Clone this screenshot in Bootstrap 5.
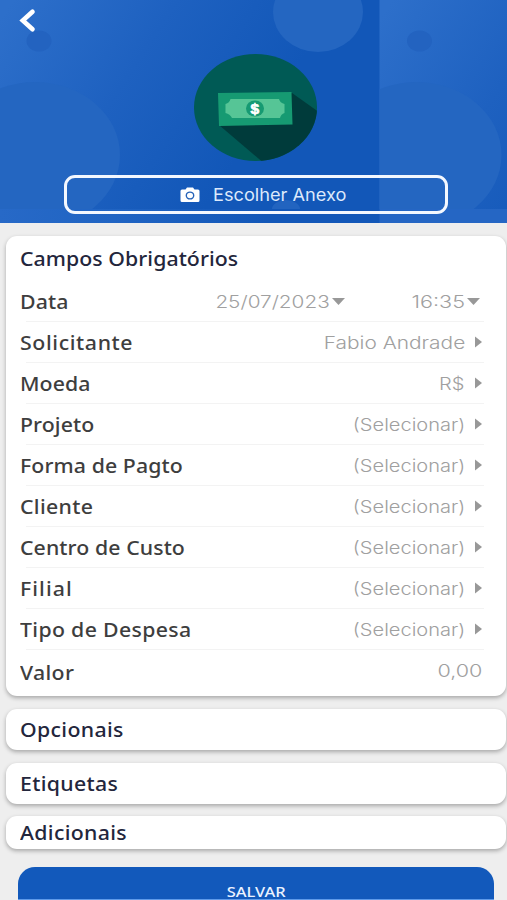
<!DOCTYPE html>
<html lang="pt-BR">
<head>
<meta charset="utf-8">
<meta name="viewport" content="width=device-width, initial-scale=1">
<title>Despesa</title>
<link href="https://cdn.jsdelivr.net/npm/bootstrap@5.3.0/dist/css/bootstrap.min.css" rel="stylesheet">
<style>
body{background:#eee;font-family:"Noto Sans","Open Sans",sans-serif;height:900px;overflow:hidden}
.hero{height:223px;background:#1257b8}
.hero-bg{z-index:0}
.back{left:18px;top:8px}
.note{margin:53px 0 0 2px}
.anexo{width:384px;height:39px;margin:13px 0 0 4px;border:3px solid #f4f8ff;border-radius:11px;color:#dce9fb;font:400 17px Inter,sans-serif}
.anexo:hover{border-color:#fff;color:#fff}
.anexo .cam{margin:0 13px 0 113px}
.anexo span{transform-origin:left;transform:scaleX(1.07)}
.stretch-l,.stretch-r{display:inline-block;white-space:nowrap}
.panel{margin:0 1px 0 6px;border:0;border-radius:11px;box-shadow:0 2px 4px rgba(0,0,0,.3);padding:0 22px 0 14px;color:#23263c}
.lbl{font-size:19px;font-weight:500;line-height:24px}
.stretch-l{transform-origin:left;transform:scaleX(1.12);letter-spacing:.3px}
.head .stretch-l{letter-spacing:.05px}
.lbl.snug{letter-spacing:.08px}
.lbl.loose{letter-spacing:.55px}
.lbl.wide{letter-spacing:.95px}
.stretch-r{transform-origin:right;transform:scaleX(1.18)}
.field{height:41px;color:#3e3e3e}
.field + .field::before{content:"";position:absolute;left:6px;right:0;top:-1px;height:1px;background:#f3f3f3}
.val{color:#a0a0a0;font:300 17px Inter,sans-serif}
.val.name{transform:scaleX(1.228)}
.val.date{transform:scaleX(1.22)}
.val.time{width:120px;transform:scaleX(1.27)}
.val.amount{margin-right:2px;padding-bottom:4px;transform:scaleX(1.27)}
.down{margin:0 4px 0 2px}
.date + .down{margin-right:0}
.next{margin:0 2px 2px 10px}
.main-panel{height:460px;margin-top:13px}
.head{height:45px}
.last{height:46px}
.bar{height:41px;margin-top:13px}
.bar-sm{height:33px;margin-top:12px}
.save{margin:18px 13px 0 18px;height:33px;border:0;border-bottom:1px solid #5f9bea;border-radius:17px 17px 0 0;background:#1259bb;color:#eaf2ff;font:500 13.5px/14px "Noto Sans",sans-serif;padding:18px 0 0}
.save span{transform:scaleX(1.22)}
</style>
<script src="https://cdn.jsdelivr.net/npm/bootstrap@5.3.0/dist/js/bootstrap.bundle.min.js"></script>
</head>
<body class="d-flex flex-column">
<header class="hero position-relative d-flex flex-column align-items-center flex-shrink-0 overflow-hidden">
  <svg class="hero-bg position-absolute top-0 start-0" width="507" height="223" viewBox="0 0 507 223" aria-hidden="true">
    <defs>
      <linearGradient id="g" gradientUnits="userSpaceOnUse" x1="0" y1="20" x2="230" y2="170"><stop offset="0" stop-color="#2d6fca"/><stop offset=".5" stop-color="#1e61c0"/><stop offset="1" stop-color="#1257b8"/></linearGradient>
      <linearGradient id="s" x1="0" x2="1"><stop offset="0" stop-color="#2769c7"/><stop offset=".3" stop-color="#2064c3"/><stop offset=".7" stop-color="#1257b8"/></linearGradient>
      <clipPath id="c"><rect width="380" height="209"/></clipPath>
    </defs>
    <rect width="380" height="209" fill="url(#g)"/>
    <g clip-path="url(#c)">
      <ellipse cx="35" cy="155" rx="85" ry="73" fill="#2466c1"/>
      <ellipse cx="39" cy="41" rx="12.500" ry="10.500" fill="#2363c0"/>
      <ellipse cx="318" cy="12" rx="45" ry="40" fill="#2466c1"/>
      <ellipse cx="286" cy="209" rx="14" ry="9" fill="#2264c0"/>
    </g>
    <rect y="209" width="380" height="14" fill="url(#s)"/>
    <g transform="translate(379.500 0)">
      <rect width="127.500" height="209" fill="url(#g)"/>
      <g clip-path="url(#c)">
        <ellipse cx="37" cy="155" rx="85" ry="73" fill="#2466c1"/>
        <ellipse cx="40" cy="41" rx="12.500" ry="10.500" fill="#2363c0"/>
      </g>
      <rect y="209" width="127.500" height="14" fill="#2566c4"/>
    </g>
  </svg>
  <a href="#" class="back position-absolute lh-1" aria-label="Voltar"><svg width="20" height="26" viewBox="0 0 20 26"><path d="M14.500 3.800 4.800 12.500 14.500 21.200" fill="none" stroke="#fff" stroke-width="4.600" stroke-linecap="round"/></svg></a>
  <svg class="note position-relative flex-shrink-0" width="126" height="109" viewBox="192 53 126 109" aria-hidden="true">
    <clipPath id="d"><ellipse cx="255.500" cy="107.500" rx="61.500" ry="53.500"/></clipPath>
    <ellipse cx="255.500" cy="107.500" rx="61.500" ry="53.500" fill="#005a55"/>
    <path clip-path="url(#d)" d="M292 93 330 120V170H272L219 125Z" fill="#003b3b"/>
    <path d="M218 93 291.500 92 292.500 124.500 219 126Z" fill="#169a72"/>
    <path d="M230.500 99H279Q280 103 284.500 104V113Q281 114 280 118H232Q230 114 225.500 113V104Q229.500 103 230.500 99Z" fill="#56c596"/>
    <ellipse cx="255" cy="108.500" rx="9" ry="8" fill="#169a72"/>
    <text x="254.800" y="114" text-anchor="middle" font-family="Liberation Sans,sans-serif" font-weight="700" font-size="15.500" fill="#fff" stroke="#fff" stroke-width=".7">$</text>
  </svg>
  <button type="button" class="btn anexo position-relative d-flex align-items-center p-0 flex-shrink-0"><svg class="cam flex-shrink-0" width="20" height="16" viewBox="0 0 20 16"><path fill="#fff" d="M2 2.500H5.500L7 .5H13L14.500 2.500H18Q19.500 2.500 19.500 4V13.500Q19.500 15 18 15H2Q.5 15 .5 13.500V4Q.5 2.500 2 2.500Z"/><ellipse cx="10" cy="8.500" rx="3.700" ry="3.400" fill="none" stroke="#2562b8" stroke-width="1.400"/></svg><span>Escolher Anexo</span></button>
</header>
<main>
  <section class="card panel main-panel">
    <div class="head lbl d-flex align-items-center"><span class="stretch-l">Campos Obrigatórios</span></div>
    <div class="field position-relative d-flex align-items-center"><span class="lbl stretch-l snug">Data</span><span class="val date ms-auto stretch-r">25/07/2023</span><svg class="down" width="13" height="7"><path d="M0 0H13L6.500 7Z" fill="#989898"/></svg><span class="val time stretch-r text-end">16:35</span><svg class="down" width="13" height="7"><path d="M0 0H13L6.500 7Z" fill="#989898"/></svg></div>
    <div class="field position-relative d-flex align-items-center"><span class="lbl stretch-l loose">Solicitante</span><span class="val name ms-auto stretch-r">Fabio Andrade</span><svg class="next" width="7" height="12"><path d="M0 .5 7 6 0 11.500Z" fill="#989898"/></svg></div>
    <div class="field position-relative d-flex align-items-center"><span class="lbl stretch-l snug">Moeda</span><span class="val ms-auto stretch-r">R$</span><svg class="next" width="7" height="12"><path d="M0 .5 7 6 0 11.500Z" fill="#989898"/></svg></div>
    <div class="field position-relative d-flex align-items-center"><span class="lbl stretch-l snug">Projeto</span><span class="val ms-auto stretch-r">(Selecionar)</span><svg class="next" width="7" height="12"><path d="M0 .5 7 6 0 11.500Z" fill="#989898"/></svg></div>
    <div class="field position-relative d-flex align-items-center"><span class="lbl stretch-l snug">Forma de Pagto</span><span class="val ms-auto stretch-r">(Selecionar)</span><svg class="next" width="7" height="12"><path d="M0 .5 7 6 0 11.500Z" fill="#989898"/></svg></div>
    <div class="field position-relative d-flex align-items-center"><span class="lbl stretch-l">Cliente</span><span class="val ms-auto stretch-r">(Selecionar)</span><svg class="next" width="7" height="12"><path d="M0 .5 7 6 0 11.500Z" fill="#989898"/></svg></div>
    <div class="field position-relative d-flex align-items-center"><span class="lbl stretch-l snug">Centro de Custo</span><span class="val ms-auto stretch-r">(Selecionar)</span><svg class="next" width="7" height="12"><path d="M0 .5 7 6 0 11.500Z" fill="#989898"/></svg></div>
    <div class="field position-relative d-flex align-items-center"><span class="lbl stretch-l wide">Filial</span><span class="val ms-auto stretch-r">(Selecionar)</span><svg class="next" width="7" height="12"><path d="M0 .5 7 6 0 11.500Z" fill="#989898"/></svg></div>
    <div class="field position-relative d-flex align-items-center"><span class="lbl stretch-l">Tipo de Despesa</span><span class="val ms-auto stretch-r">(Selecionar)</span><svg class="next" width="7" height="12"><path d="M0 .5 7 6 0 11.500Z" fill="#989898"/></svg></div>
    <div class="field last position-relative d-flex align-items-center"><span class="lbl stretch-l">Valor</span><span class="val amount ms-auto stretch-r">0,00</span></div>
  </section>
  <section class="card panel bar lbl justify-content-center"><div><span class="stretch-l">Opcionais</span></div></section>
  <section class="card panel bar lbl justify-content-center"><div><span class="stretch-l">Etiquetas</span></div></section>
  <section class="card panel bar-sm lbl justify-content-center"><div><span class="stretch-l">Adicionais</span></div></section>
  <div class="d-flex"><button type="button" class="btn save flex-fill d-flex justify-content-center align-items-start"><span>SALVAR</span></button></div>
</main>
</body>
</html>
